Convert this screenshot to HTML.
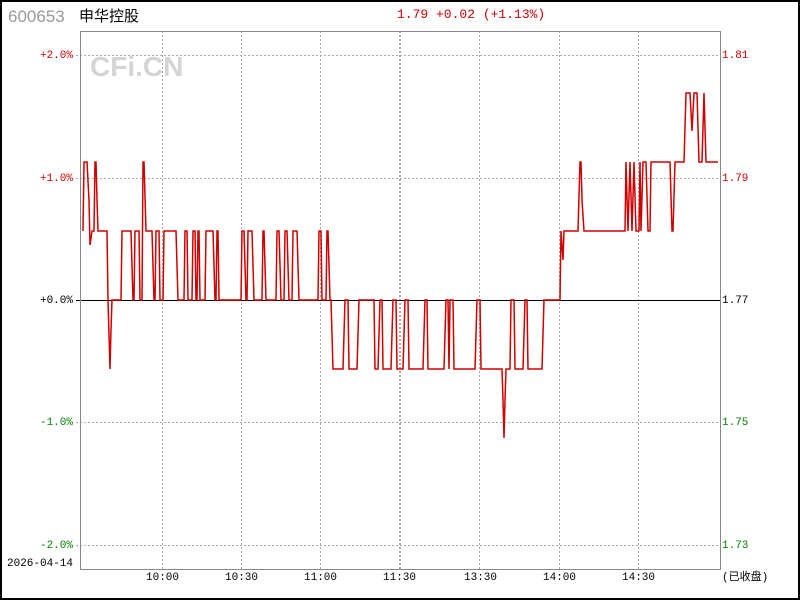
<!DOCTYPE html>
<html><head><meta charset="utf-8"><style>
html,body{margin:0;padding:0;background:#fff;}
body{width:800px;height:600px;overflow:hidden;position:relative;}
.t{position:absolute;font-family:"Liberation Mono","Noto Sans CJK SC",monospace;font-size:11px;white-space:nowrap;line-height:12px;}
</style></head><body>
<svg width="800" height="600" style="position:absolute;left:0;top:0">
<rect x="1" y="1" width="798" height="598" fill="#fff" stroke="#000" stroke-width="2"/>
<text x="90" y="76" font-family="Liberation Sans,sans-serif" font-weight="bold" font-size="28" fill="#d4d4d4">CFi.CN</text>
<g stroke="#aaa" stroke-width="1" stroke-dasharray="2,2" shape-rendering="crispEdges">
<line x1="76" y1="55.5" x2="720" y2="55.5"/>
<line x1="76" y1="178.5" x2="720" y2="178.5"/>
<line x1="76" y1="422.5" x2="720" y2="422.5"/>
<line x1="76" y1="545.5" x2="720" y2="545.5"/>
<line x1="162.5" y1="31" x2="162.5" y2="569"/>
<line x1="241.5" y1="31" x2="241.5" y2="569"/>
<line x1="320.5" y1="31" x2="320.5" y2="569"/>
<line x1="399.5" y1="31" x2="399.5" y2="569"/>
<line x1="400.5" y1="31" x2="400.5" y2="569"/>
<line x1="479.5" y1="31" x2="479.5" y2="569"/>
<line x1="559.5" y1="31" x2="559.5" y2="569"/>
<line x1="638.5" y1="31" x2="638.5" y2="569"/>
</g>
<line x1="76" y1="300.5" x2="720" y2="300.5" stroke="#000" stroke-width="1" shape-rendering="crispEdges"/>
<rect x="80.5" y="31.5" width="640" height="538" fill="none" stroke="#888" stroke-width="1" shape-rendering="crispEdges"/>
<polyline fill="none" stroke="#d00000" stroke-width="1.5" points="83,231 84,162 87,162 89,200 90,245 92,231 94,231 95,162 96,162 97,200 98,231 107,231 108,300 110,369 111,330 112,300 120,300 121,300 122,231 131,231 133,300 134,300 135,231 139,231 140,300 142,300 143,162 144,162 146,231 152,231 154,300 155,300 156,231 159,231 160,300 163,300 164,231 176,231 178,300 184,300 185,231 187,231 188,300 192,300 193,231 195,231 196,300 197,300 198,231 199,231 200,300 205,300 206,231 213,231 215,300 216,300 217,231 218,231 219,300 241,300 242,231 244,231 246,300 247,300 248,231 252,231 254,300 262,300 263,231 264,231 266,300 276,300 277,231 279,231 281,300 284,300 285,231 287,231 289,300 292,300 293,231 297,231 299,300 318,300 319,231 321,231 322,300 326,300 327,231 328,231 330,300 331,300 333,369 343,369 345,300 348,300 349,369 357,369 359,300 374,300 375,369 378,369 380,300 382,300 383,369 391,369 393,300 396,300 397,369 403,369 405,300 408,300 409,369 423,369 425,300 427,300 428,369 444,369 446,300 448,300 449,369 450,300 453,300 454,369 475,369 477,300 480,300 481,369 502,369 503,400 504,438 505,400 506,369 508,369 510,369 511,300 514,300 515,369 523,369 525,300 527,300 528,369 542,369 544,300 560,300 561,231 563,260 564,231 567,231 578,231 580,162 581,162 582,200 584,231 625,231 626,162 628,231 630,162 632,231 634,162 636,231 639,231 640,162 641,231 643,162 646,162 648,231 650,231 651,162 670,162 672,231 673,231 675,162 684,162 686,93 690,93 692,131 694,93 697,93 699,162 702,162 704,93 706,162 718,162"/>
</svg>
<div class="t" style="left:8px;top:7px;font-family:'Liberation Sans',sans-serif;font-size:17px;line-height:20px;color:#999">600653</div>
<div class="t" style="left:79px;top:7px;font-family:'Liberation Sans','Noto Sans CJK SC',sans-serif;font-size:15px;line-height:20px;color:#000">申华控股</div>
<div class="t" style="left:397px;top:8px;font-size:13px;line-height:14px;color:#d00000">1.79 +0.02 (+1.13%)</div>
<div class="t" style="right:727px;top:50px;color:#d00000">+2.0%</div>
<div class="t" style="right:727px;top:173px;color:#d00000">+1.0%</div>
<div class="t" style="right:727px;top:295px;color:#000">+0.0%</div>
<div class="t" style="right:727px;top:417px;color:#008000">-1.0%</div>
<div class="t" style="right:727px;top:540px;color:#008000">-2.0%</div>
<div class="t" style="left:722px;top:50px;color:#d00000">1.81</div>
<div class="t" style="left:722px;top:173px;color:#d00000">1.79</div>
<div class="t" style="left:722px;top:295px;color:#000">1.77</div>
<div class="t" style="left:722px;top:417px;color:#008000">1.75</div>
<div class="t" style="left:722px;top:540px;color:#008000">1.73</div>
<div class="t" style="left:7px;top:558px;color:#000">2026-04-14</div>
<div class="t" style="left:146px;top:572px;color:#000">10:00</div>
<div class="t" style="left:225px;top:572px;color:#000">10:30</div>
<div class="t" style="left:304px;top:572px;color:#000">11:00</div>
<div class="t" style="left:383px;top:572px;color:#000">11:30</div>
<div class="t" style="left:464px;top:572px;color:#000">13:30</div>
<div class="t" style="left:543px;top:572px;color:#000">14:00</div>
<div class="t" style="left:622px;top:572px;color:#000">14:30</div>
<div class="t" style="left:722px;top:572px;color:#000">(已收盘)</div>
</body></html>
